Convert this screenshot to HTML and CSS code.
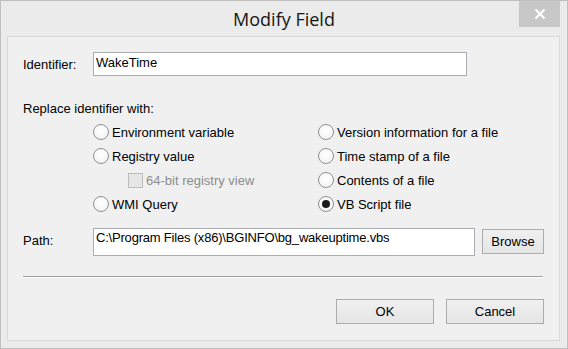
FILE: index.html
```html
<!DOCTYPE html>
<html>
<head>
<meta charset="utf-8">
<link rel="stylesheet" href="styles.css">
</head>
<body>
<div class="window">
  <div class="titlebar">
    <span class="spacer"></span>
    <h1 class="title">Modify Field</h1>
    <button class="close" aria-label="Close">
      <svg width="12" height="10" viewBox="0 0 12 10"><path d="M1.5 0.5 L10.5 9.5 M10.5 0.5 L1.5 9.5" stroke="#fff" stroke-width="2.2" fill="none"/></svg>
    </button>
  </div>
  <div class="client">
    <div class="field-row id-row">
      <span class="field-label">Identifier:</span>
      <div class="textbox id-box">WakeTime</div>
    </div>
    <div class="section-label">Replace identifier with:</div>
    <div class="options">
      <div class="opt"><span class="radio"></span>Environment variable</div>
      <div class="opt"><span class="radio"></span>Version information for a file</div>
      <div class="opt"><span class="radio"></span>Registry value</div>
      <div class="opt"><span class="radio"></span>Time stamp of a file</div>
      <div class="opt sub disabled"><span class="check"></span>64-bit registry view</div>
      <div class="opt"><span class="radio"></span>Contents of a file</div>
      <div class="opt"><span class="radio"></span>WMI Query</div>
      <div class="opt"><span class="radio checked"></span>VB Script file</div>
    </div>
    <div class="field-row path-row">
      <span class="field-label">Path:</span>
      <div class="textbox path-box">C:\Program Files (x86)\BGINFO\bg_wakeuptime.vbs</div>
      <button class="btn browse">Browse</button>
    </div>
    <hr class="sep">
    <div class="actions">
      <button class="btn action">OK</button>
      <button class="btn action">Cancel</button>
    </div>
  </div>
</div>
</body>
</html>
```
FILE: styles.css
```css
* { box-sizing: border-box; }
html, body { margin: 0; padding: 0; }
body {
  width: 568px;
  height: 349px;
  font-family: "Liberation Sans", Arial, sans-serif;
  font-size: 13px;
  color: #000;
  background: #ebebeb;
}
.window {
  width: 568px;
  height: 349px;
  border: 1px solid #bfbfbf;
  background: #ebebeb;
  display: flex;
  flex-direction: column;
  padding: 0 7px 7px 6px;
}
.titlebar {
  height: 35px;
  margin: 0 -7px 0 -6px;
  display: grid;
  grid-template-columns: 1fr auto 1fr;
  align-items: center;
}
.title {
  margin: 0;
  font-family: "Open Sans", "Noto Sans", sans-serif;
  font-weight: 400;
  font-size: 18px;
  color: #151515;
  line-height: 24px;
}
.close {
  justify-self: end;
  align-self: start;
  width: 41px;
  height: 26px;
  margin-right: 7px;
  border: none;
  padding: 0;
  background: #c7c7c7;
  display: flex;
  align-items: center;
  justify-content: center;
}
.client {
  flex: 1;
  border: 1px solid #d9d9d9;
  background: #f0f0f0;
  padding: 15px 15px 0 15px;
  display: flex;
  flex-direction: column;
}
.field-row {
  display: flex;
  align-items: flex-start;
}
.field-label {
  width: 70px;
  line-height: 15px;
  flex: none;
}
.id-row .field-label { margin-top: 5px; }
.path-row .field-label { margin-top: 5px; }
.textbox {
  background: #fff;
  border: 1px solid #abadb3;
  line-height: 15px;
  padding-left: 2px;
  white-space: nowrap;
}
.id-box {
  width: 374px;
  height: 24px;
  padding-top: 2px;
}
.path-box {
  width: 382px;
  height: 28px;
  padding-top: 1px;
  letter-spacing: -0.2px;
}
.section-label {
  margin-top: 25px;
  line-height: 15px;
}
.options {
  margin-top: 4px;
  margin-left: 70px;
  display: grid;
  grid-template-columns: 225px auto;
  grid-auto-rows: 24px;
}
.opt {
  display: flex;
  align-items: center;
  gap: 3px;
  line-height: 15px;
  white-space: nowrap;
}
.radio {
  width: 16px;
  height: 16px;
  border-radius: 50%;
  border: 1px solid #929292;
  background: radial-gradient(circle at 50% 40%, #ffffff 0%, #f6f6f6 60%, #e6e6e6 100%);
  display: flex;
  align-items: center;
  justify-content: center;
  flex: none;
}
.radio.checked::after {
  content: "";
  width: 8px;
  height: 8px;
  border-radius: 50%;
  background: #1a1a1a;
}
.sub { padding-left: 35px; }
.check {
  width: 15px;
  height: 15px;
  border: 1px solid #bcbcbc;
  background: #e6e6e6;
  flex: none;
}
.disabled { color: #8d8d8d; }
.path-row { margin-top: 12px; }
.btn {
  font-family: "Liberation Sans", Arial, sans-serif;
  font-size: 13px;
  color: #000;
  border: 1px solid #acacac;
  background: linear-gradient(#f0f0f0, #e5e5e5);
  padding: 0;
  height: 25px;
  line-height: 15px;
}
.browse {
  width: 62px;
  margin-left: 7px;
  margin-top: 1px;
}
.sep {
  margin: 20px 1px 0 0;
  height: 0;
  border: none;
  border-top: 1px solid #a0a0a0;
  border-bottom: 1px solid #ffffff;
}
.actions {
  margin-top: 21px;
  display: flex;
  justify-content: flex-end;
  gap: 12px;
}
.action { width: 98px; }
```
